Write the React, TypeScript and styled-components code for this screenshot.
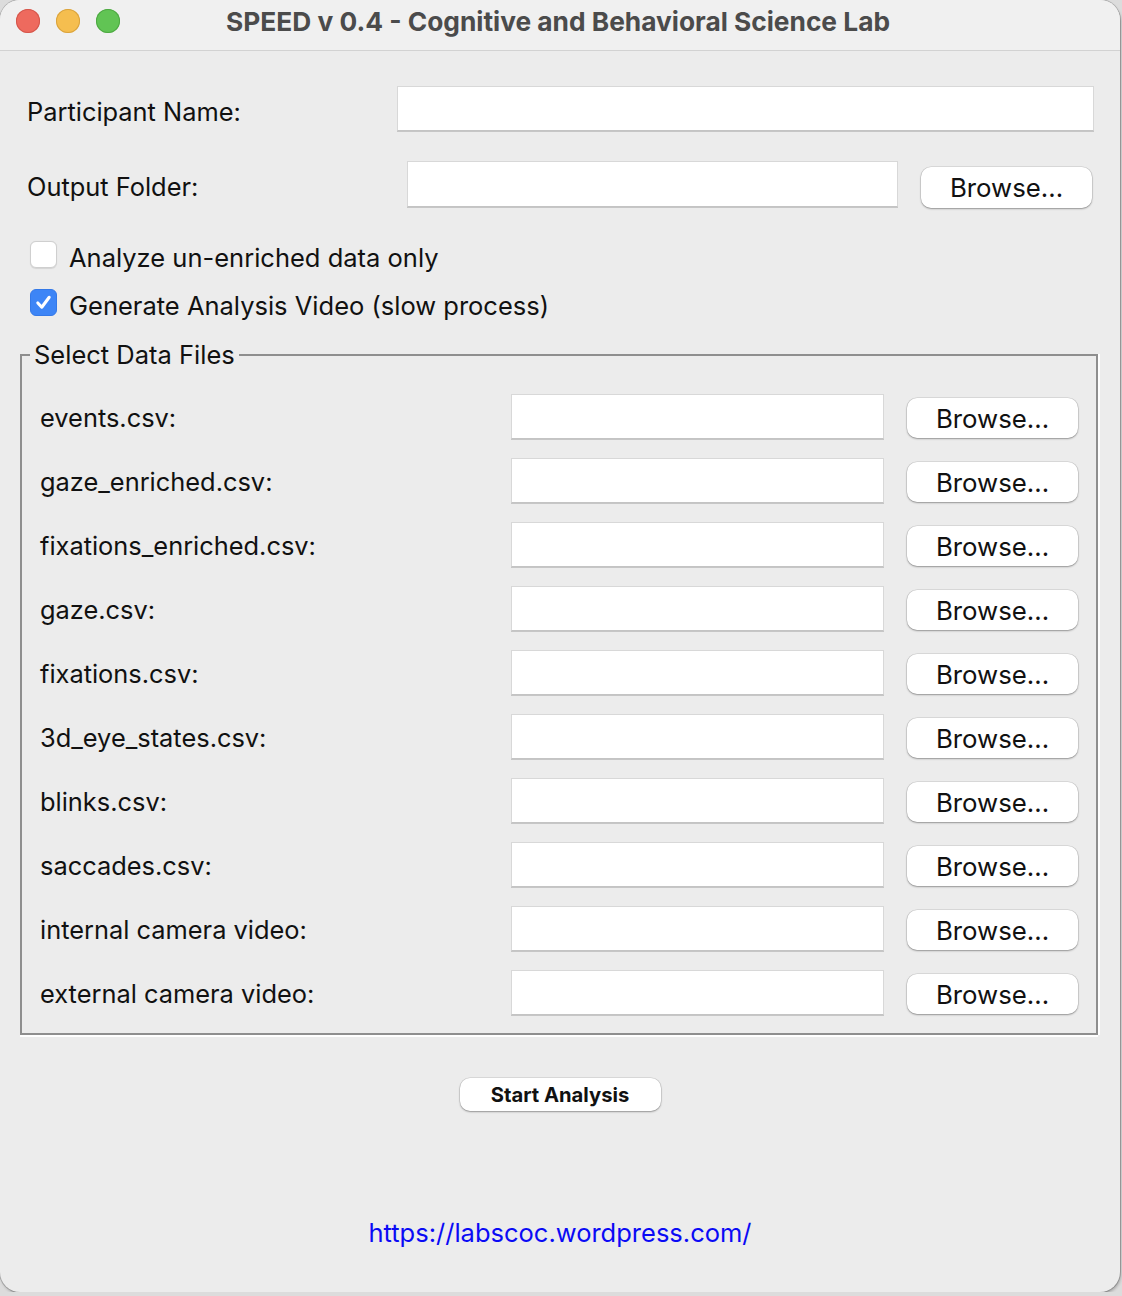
import React from "react";
import styled, { createGlobalStyle } from "styled-components";

const Global = createGlobalStyle`
  html, body { margin: 0; padding: 0; }
  body {
    background: #dcdcdc;
    font-family: Inter, "Liberation Sans", Arial, sans-serif;
    -webkit-font-smoothing: antialiased;
  }
`;

const Window = styled.div`
  width: 1120px;
  height: 1292px;
  background: #ececec;
  border-radius: 20px;
  overflow: hidden;
  box-shadow: 0 0 0 1px rgba(0, 0, 0, 0.18), 1px 2px 3px rgba(0, 0, 0, 0.25);
  display: flex;
  flex-direction: column;
  color: #111;
`;

const TitleBar = styled.div`
  height: 50px;
  flex: none;
  background: #f0f0f0;
  border-bottom: 1px solid #d2d2d2;
  display: flex;
  align-items: center;
  position: relative;
`;

const Lights = styled.div`
  position: absolute;
  left: 16px;
  top: 9px;
  display: flex;
  gap: 16px;
`;

const Light = styled.span<{ $c: string; $b: string }>`
  width: 24px;
  height: 24px;
  border-radius: 50%;
  background: ${(p) => p.$c};
  box-shadow: inset 0 0 0 1px ${(p) => p.$b};
`;

const Title = styled.div`
  flex: 1;
  text-align: center;
  font-weight: 700;
  font-size: 26.3px;
  color: #4b4b4b;
  padding-right: 4px;
  margin-top: -8px;
`;

const Body = styled.div`
  flex: 1;
  display: flex;
  flex-direction: column;
  padding: 35px 0 0 0;
`;

const TopRow = styled.div<{ $labelW: number; $mt?: number }>`
  display: flex;
  align-items: flex-start;
  padding-left: 27px;
  margin-top: ${(p) => p.$mt ?? 0}px;
  & > label {
    width: ${(p) => p.$labelW}px;
    flex: none;
  }
`;

const Label = styled.label<{ $h: number }>`
  font-size: 25.4px;
  line-height: ${(p) => p.$h}px;
  height: ${(p) => p.$h}px;
  padding-top: 2px;
  box-sizing: border-box;
  white-space: nowrap;
  color: #111;
`;

const Entry = styled.div<{ $w: number; $h: number }>`
  width: ${(p) => p.$w}px;
  height: ${(p) => p.$h}px;
  flex: none;
  box-sizing: border-box;
  background: #fff;
  border: 1px solid #d8d8d8;
  border-bottom: 1px solid #c4c4c4;
  box-shadow: 0 1px 0 #c6c6c6;
`;

const Button = styled.button<{ $w: number; $h: number; $bold?: boolean }>`
  width: ${(p) => p.$w}px;
  height: ${(p) => p.$h}px;
  flex: none;
  background: #fff;
  border: none;
  border-radius: 10px;
  box-shadow: 0 0 0 0.5px rgba(0, 0, 0, 0.14), 0 1px 2px rgba(0, 0, 0, 0.32);
  font-family: Inter, "Liberation Sans", Arial, sans-serif;
  font-size: ${(p) => (p.$bold ? 20.2 : 25.8)}px;
  font-weight: ${(p) => (p.$bold ? 700 : 400)};
  color: #111;
  padding: 0;
  cursor: default;
`;

const TopButton = styled(Button)`
  margin-left: 23px;
  margin-top: 6px;
`;

const Checks = styled.div`
  display: flex;
  flex-direction: column;
  gap: 21px;
  padding-left: 30px;
  margin-top: 32px;
`;

const CheckRow = styled.div`
  display: flex;
  align-items: center;
  gap: 12px;
  height: 27px;
`;

const Box = styled.span<{ $on?: boolean }>`
  width: 27px;
  height: 27px;
  box-sizing: border-box;
  border-radius: 6px;
  background: ${(p) => (p.$on ? "#3d85f6" : "#fff")};
  border: 1px solid ${(p) => (p.$on ? "#3479e8" : "#cfcfcf")};
  box-shadow: ${(p) => (p.$on ? "none" : "0 0.5px 1px rgba(0,0,0,0.1)")};
  display: flex;
  align-items: center;
  justify-content: center;
`;

const CheckText = styled.span`
  font-size: 25.5px;
  color: #111;
  margin-top: 5px;
`;

const Group = styled.div`
  position: relative;
  margin: 38px 22px 0 20px;
  border: 2px solid #8e8e8e;
  box-shadow: 0 2px 0 #fff, 2px 0 0 #fff;
  padding: 29px 18px 8px 18px;
`;

const Legend = styled.div`
  position: absolute;
  left: 8px;
  top: -17px;
  padding: 0 4px 0 4px;
  background: #ececec;
  font-size: 25.5px;
  line-height: 32px;
  color: #111;
`;

const FileRow = styled.div`
  height: 64px;
  display: flex;
  align-items: center;
`;

const FileLabel = styled.label`
  width: 471px;
  flex: none;
  font-size: 25.4px;
  color: #111;
  white-space: nowrap;
  margin-top: 1px;
`;

const FileEntry = styled(Entry)`
  margin-top: -2px;
`;

const FileButton = styled(Button)`
  margin-left: 23px;
  margin-top: 2px;
`;

const StartWrap = styled.div`
  display: flex;
  justify-content: center;
  margin-top: 43px;
`;

const LinkWrap = styled.div`
  display: flex;
  justify-content: center;
  margin-top: 106px;
`;

const Link = styled.a`
  font-size: 25.5px;
  color: #0a0af5;
  text-decoration: none;
`;

const files = [
  "events.csv:",
  "gaze_enriched.csv:",
  "fixations_enriched.csv:",
  "gaze.csv:",
  "fixations.csv:",
  "3d_eye_states.csv:",
  "blinks.csv:",
  "saccades.csv:",
  "internal camera video:",
  "external camera video:",
];

export default function App() {
  return (
    <>
      <Global />
      <Window>
        <TitleBar>
          <Lights>
            <Light $c="#ee6a5e" $b="#d4574c" />
            <Light $c="#f5be4f" $b="#d9a33e" />
            <Light $c="#61c454" $b="#4ea843" />
          </Lights>
          <Title>SPEED v 0.4 - Cognitive and Behavioral Science Lab</Title>
        </TitleBar>
        <Body>
          <TopRow $labelW={370}>
            <Label $h={48}>Participant Name:</Label>
            <Entry $w={697} $h={45} />
          </TopRow>
          <TopRow $labelW={380} $mt={27}>
            <Label $h={48}>Output Folder:</Label>
            <Entry $w={491} $h={46} />
            <TopButton $w={171} $h={41}>
              Browse...
            </TopButton>
          </TopRow>
          <Checks>
            <CheckRow>
              <Box />
              <CheckText>Analyze un-enriched data only</CheckText>
            </CheckRow>
            <CheckRow>
              <Box $on>
                <svg width="19" height="19" viewBox="0 0 20 20">
                  <path
                    d="M4 10.5 L8.2 15 L16 4.5"
                    fill="none"
                    stroke="#fff"
                    strokeWidth="3.2"
                    strokeLinecap="round"
                    strokeLinejoin="round"
                  />
                </svg>
              </Box>
              <CheckText>Generate Analysis Video (slow process)</CheckText>
            </CheckRow>
          </Checks>
          <Group>
            <Legend>Select Data Files</Legend>
            {files.map((f) => (
              <FileRow key={f}>
                <FileLabel>{f}</FileLabel>
                <FileEntry $w={373} $h={45} />
                <FileButton $w={171} $h={40}>
                  Browse...
                </FileButton>
              </FileRow>
            ))}
          </Group>
          <StartWrap>
            <Button $w={201} $h={33} $bold>
              Start Analysis
            </Button>
          </StartWrap>
          <LinkWrap>
            <Link href="#">https://labscoc.wordpress.com/</Link>
          </LinkWrap>
        </Body>
      </Window>
    </>
  );
}
